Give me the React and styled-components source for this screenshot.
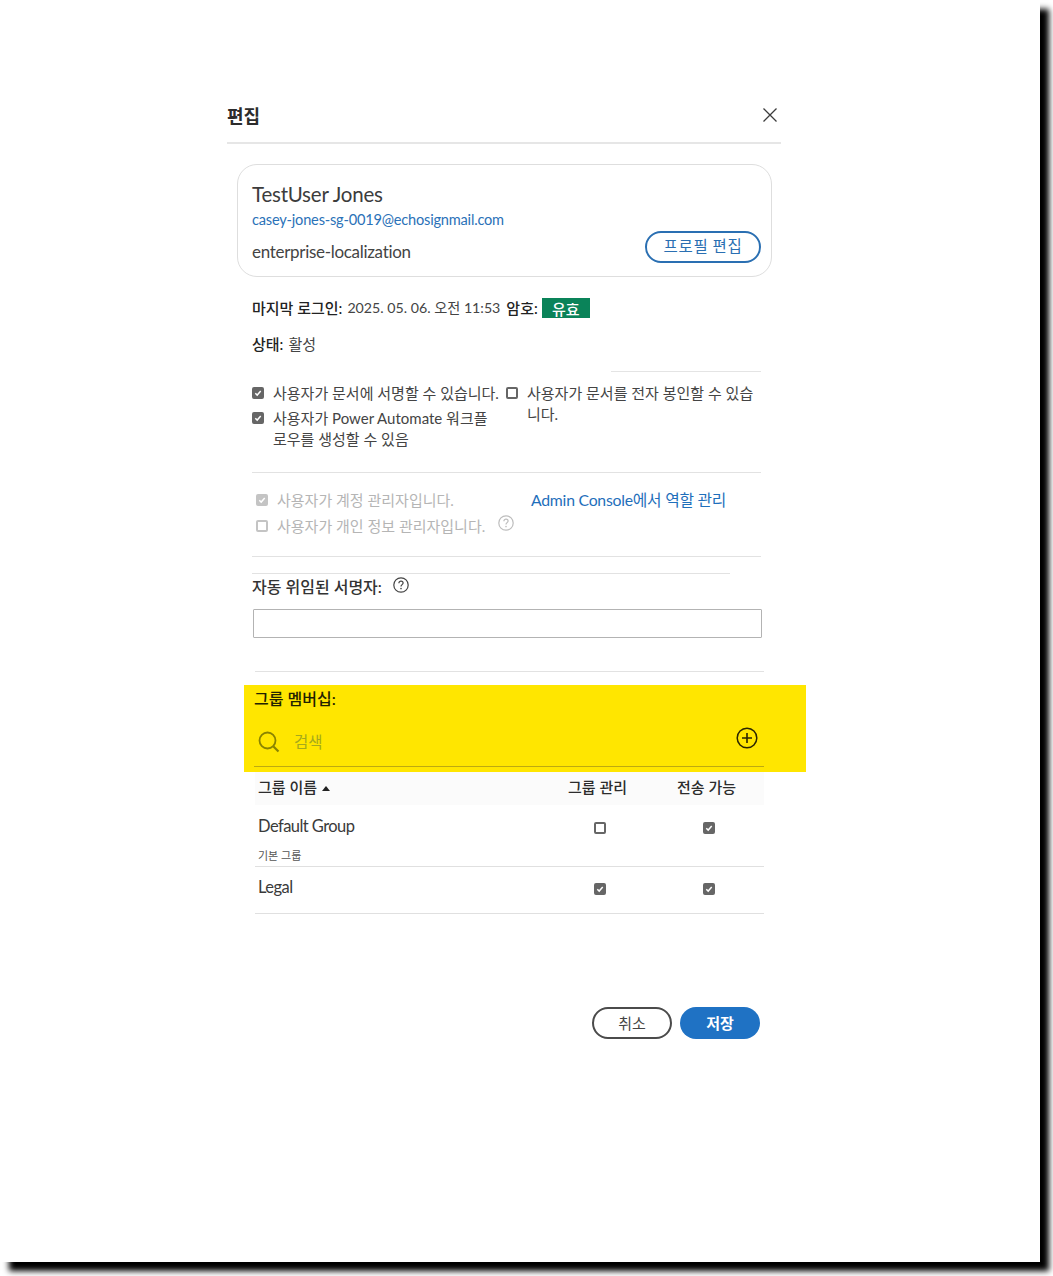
import React from "react";
import styled, { createGlobalStyle } from "styled-components";

const Global = createGlobalStyle`
  html, body { margin: 0; padding: 0; background: #fff; }
  body { font-family: "Lato", "Noto Sans CJK KR", sans-serif; color: #2c2c2c; }
`;
const Page = styled.div`width: 1053px; height: 1276px; overflow: hidden; background: #fff;`;
const Paper = styled.div`
  width: 1040px; height: 1262px; background: #fff; box-shadow: 9px 9px 6px #000;
  padding: 101px 0 0 227px; box-sizing: border-box;
`;
const Dialog = styled.div`width: 554px; display: flex; flex-direction: column;`;
const Header = styled.header`
  height: 41px; display: flex; align-items: flex-start; justify-content: space-between;
  border-bottom: 2px solid #e6e6e6;
`;
const Title = styled.h2`margin: 3px 0 0; font-size: 18px; line-height: 24px; font-weight: 700; color: #2c2c2c;`;
const Close = styled.button`
  border: 0; background: none; padding: 0; margin: 6px 3px 0 0; width: 16px; height: 16px; display: flex;
`;
const Card = styled.section`
  margin: 20px 9px 0 10px; height: 113px; box-sizing: border-box; border: 1px solid #dedede; border-radius: 20px;
  padding: 15px 10px 0 14px; display: flex; flex-direction: column;
`;
const Name = styled.div`font-size: 20.5px; line-height: 28px; color: #3c3c3c; letter-spacing: -0.2px;`;
const Email = styled.a`font-size: 14.6px; line-height: 22px; margin-top: 1px; color: #2b72b8; letter-spacing: -0.2px;`;
const OrgRow = styled.div`display: flex; justify-content: space-between; align-items: flex-start; margin-top: 9px;`;
const Org = styled.div`font-size: 17px; line-height: 24px; color: #444; letter-spacing: -0.3px;`;
const OutlineBtn = styled.button`
  width: 116px; height: 32px; margin-top: -9px; border: 2px solid #2a6fb2; border-radius: 16px; background: #fff;
  color: #2a6fb2; font: 400 15.5px "Noto Sans CJK KR", sans-serif; letter-spacing: .7px; padding: 0 0 4px;
`;
const Meta = styled.div`
  margin: ${p => p.$top}px 0 0 25px; height: 20px; display: flex; align-items: center; font-size: 15px; color: #444; white-space: nowrap;
`;
const Strong = styled.b`font-weight: 500; color: #222; margin-right: ${p => p.$gap ?? 5}px;`;
const DateText = styled.span`font-size: 14.2px; margin-right: 6px;`;
const Badge = styled.span`
  margin: 2px 0 0 4px; width: 48px; height: 20px; background: #0a8359; color: #fff; font-weight: 500; font-size: 15px;
  display: flex; align-items: center; justify-content: center;
`;
const ShortRule = styled.hr`
  border: 0; border-top: 1px solid ${p => p.$c || "#e4e4e4"}; margin: ${p => p.$top}px ${p => p.$right}px 0 ${p => p.$left}px;
`;
const TwoCols = styled.div`
  margin: 11px 20px 0 25px; display: grid; grid-template-columns: 254px 1fr; height: 89px;
`;
const Col = styled.div`display: flex; flex-direction: column;`;
const CheckRow = styled.label`
  display: flex; align-items: flex-start; font-size: 15px; line-height: 21px; color: ${p => p.$muted ? "#b5b5b5" : "#444"};
  margin-bottom: ${p => p.$mb || 0}px;
`;
const WrapText = styled.span`max-width: 225px;`;
const Box = styled.span`
  flex: none; width: 12px; height: 12px; box-sizing: border-box; border-radius: 2px; margin: 4px ${p => p.$gap ?? 9}px 0 0;
  border: 2px solid ${p => p.$c}; background: ${p => p.$on ? p.$c : "transparent"}; display: flex; align-items: center; justify-content: center;
`;
const Rule = styled.hr`
  border: 0; border-top: 1px solid #e2e2e2; margin: ${p => p.$top}px ${p => p.$right ?? 20}px 0 ${p => p.$left ?? 25}px;
`;
const AdminBlock = styled.div`
  margin: 17px 20px 0 29px; height: 66px; display: grid; grid-template-columns: 275px 1fr;
`;
const AdminLink = styled.a`font-size: 15.8px; line-height: 21px; margin-top: -1px; color: #1f6fbb; letter-spacing: -0.25px;`;
const HelpWrap = styled.span`display: inline-flex; margin: ${p => p.$mt ?? -1}px 0 0 ${p => p.$ml ?? 13}px;`;
const LabelRow = styled.div`margin: 1px 0 0 25px; height: 22px; display: flex; align-items: center; font-size: 16px; font-weight: 500; color: #333;`;
const Field = styled.input`
  margin: 12px 19px 0 26px; height: 29px; box-sizing: border-box; border: 1px solid #b3b3b3; border-radius: 1px; background: #fff;
`;
const Highlight = styled.section`
  margin: 13px -25px 0 17px; height: 87px; background: #ffe600; padding: 3px 0 0 10px; box-sizing: border-box;
`;
const GroupLabel = styled.div`font-size: 16px; font-weight: 500; line-height: 22px; color: #222200;`;
const SearchRow = styled.div`
  margin-top: 14px; width: 510px; height: 43px; box-sizing: border-box; border-bottom: 1px solid #bdaa10;
  display: flex; align-items: flex-start; padding: 5px 6px 0 4px;
`;
const SearchIcon = styled.span`display: flex; margin-top: 2px;`;
const SearchText = styled.span`margin: 2px 0 0 14px; flex: 1; color: #a5a91c; font-size: 15.5px; line-height: 22px;`;
const AddIcon = styled.span`display: flex; margin-top: -2px;`;
const Table = styled.div`margin: 0 17px 0 28px;`;
const TRow = styled.div`
  display: grid; grid-template-columns: 287px 109px 109px; padding-left: 3px; height: ${p => p.$h}px;
  border-bottom: ${p => p.$line ? "1px solid #e0e0e0" : "0"}; background: ${p => p.$bg || "transparent"}; box-sizing: border-box;
`;
const Th = styled.div`
  font-size: 15px; font-weight: 500; line-height: 20px; color: #2c2c2c; padding-top: 5px; text-align: ${p => p.$left ? "left" : "center"};
  display: ${p => p.$left ? "flex" : "block"}; padding-right: ${p => p.$left ? 0 : 4}px;
`;
const Sort = styled.span`display: inline-flex; margin: 9px 0 0 5px;`;
const Cell = styled.div`display: flex; flex-direction: column; padding-top: ${p => p.$pt}px;`;
const CellName = styled.div`font-size: 16.5px; line-height: 22px; color: #3a3a3a; letter-spacing: -0.55px;`;
const Sub = styled.div`font-size: 11px; line-height: 14px; margin-top: 12px; color: #555;`;
const CellCheck = styled.div`display: flex; justify-content: center; padding-top: ${p => p.$pt}px;`;
const Footer = styled.div`margin: 93px 21px 0 0; display: flex; justify-content: flex-end; gap: 8px;`;
const Cancel = styled.button`
  width: 80px; height: 32px; border: 2px solid #4b4b4b; border-radius: 16px; background: #fff; color: #444; padding: 0 0 2px;
  font: 400 15px "Noto Sans CJK KR", sans-serif;
`;
const Save = styled.button`
  width: 80px; height: 32px; border: 0; border-radius: 16px; background: #1f72c4; color: #fff; padding: 0 0 2px;
  font: 700 15px "Noto Sans CJK KR", sans-serif;
`;

const Check = ({ on, c = "#666", gap, tone = "#fff" }) => (
  <Box $on={on} $c={c} $gap={gap}>
    {on && (
      <svg width="10" height="10" viewBox="0 0 10 10" fill="none">
        <path d="M1.6 5.2 L4 7.6 L8.4 2.6" stroke={tone} strokeWidth="1.8" />
      </svg>
    )}
  </Box>
);
const Help = ({ c }) => (
  <svg width="16" height="16" viewBox="0 0 16 16" fill="none">
    <circle cx="8" cy="8" r="7.2" stroke={c} strokeWidth="1.2" />
    <path d="M5.9 6.2c0-1.2 1-2 2.1-2s2.1.8 2.1 1.9c0 1.5-2.1 1.6-2.1 3.3" stroke={c} strokeWidth="1.2" />
    <circle cx="8" cy="11.6" r=".8" fill={c} />
  </svg>
);

export default function App() {
  return (
    <Page>
      <Global />
      <Paper>
        <Dialog>
          <Header>
            <Title>편집</Title>
            <Close aria-label="닫기">
              <svg width="16" height="16" viewBox="0 0 16 16" fill="none">
                <path d="M1.5 1.5 L14.5 14.5 M14.5 1.5 L1.5 14.5" stroke="#3c3c3c" strokeWidth="1.3" />
              </svg>
            </Close>
          </Header>
          <Card>
            <Name>TestUser Jones</Name>
            <Email>casey-jones-sg-0019@echosignmail.com</Email>
            <OrgRow>
              <Org>enterprise-localization</Org>
              <OutlineBtn>프로필 편집</OutlineBtn>
            </OrgRow>
          </Card>
          <Meta $top={20}>
            <Strong>마지막 로그인:</Strong>
            <DateText>2025. 05. 06. 오전 11:53</DateText>
            <Strong $gap={0}>암호:</Strong>
            <Badge>유효</Badge>
          </Meta>
          <Meta $top={16}>
            <Strong>상태:</Strong>활성
          </Meta>
          <ShortRule $top={18} $left={384} $right={20} />
          <TwoCols>
            <Col>
              <CheckRow $mb={4}>
                <Check on />
                사용자가 문서에 서명할 수 있습니다.
              </CheckRow>
              <CheckRow>
                <Check on />
                <WrapText>사용자가 Power Automate 워크플로우를 생성할 수 있음</WrapText>
              </CheckRow>
            </Col>
            <Col>
              <CheckRow>
                <Check />
                <span>사용자가 문서를 전자 봉인할 수 있습니다.</span>
              </CheckRow>
            </Col>
          </TwoCols>
          <Rule $top={0} />
          <AdminBlock>
            <Col>
              <CheckRow $muted $mb={5}>
                <Check on c="#c4c4c4" gap={9} />
                사용자가 계정 관리자입니다.
              </CheckRow>
              <CheckRow $muted>
                <Check c="#c4c4c4" gap={9} />
                사용자가 개인 정보 관리자입니다.
                <HelpWrap><Help c="#bdbdbd" /></HelpWrap>
              </CheckRow>
            </Col>
            <AdminLink>Admin Console에서 역할 관리</AdminLink>
          </AdminBlock>
          <Rule $top={0} />
          <Rule $top={16} $right={51} />
          <LabelRow>
            자동 위임된 서명자:
            <HelpWrap $mt={-2} $ml={11}><Help c="#444" /></HelpWrap>
          </LabelRow>
          <Field />
          <Rule $top={33} $left={28} $right={17} />
          <Highlight>
            <GroupLabel>그룹 멤버십:</GroupLabel>
            <SearchRow>
              <SearchIcon>
                <svg width="22" height="22" viewBox="0 0 22 22" fill="none">
                  <circle cx="9.5" cy="9.5" r="8" stroke="#8a8400" strokeWidth="1.8" />
                  <path d="M15.5 15.5 L20.5 20.5" stroke="#8a8400" strokeWidth="2.2" />
                </svg>
              </SearchIcon>
              <SearchText>검색</SearchText>
              <AddIcon>
                <svg width="22" height="22" viewBox="0 0 22 22" fill="none">
                  <circle cx="11" cy="11" r="9.8" stroke="#2b2600" strokeWidth="1.5" />
                  <path d="M11 6 V16 M6 11 H16" stroke="#2b2600" strokeWidth="1.6" />
                </svg>
              </AddIcon>
            </SearchRow>
          </Highlight>
          <Table>
            <TRow $h={33} $bg="#fbfbfb">
              <Th $left>
                그룹 이름
                <Sort>
                  <svg width="8" height="5" viewBox="0 0 8 5"><path d="M0 5 L4 0 L8 5Z" fill="#222" /></svg>
                </Sort>
              </Th>
              <Th>그룹 관리</Th>
              <Th>전송 가능</Th>
            </TRow>
            <TRow $h={62} $line>
              <Cell $pt={10}>
                <CellName>Default Group</CellName>
                <Sub>기본 그룹</Sub>
              </Cell>
              <CellCheck $pt={13}><Check gap={0} /></CellCheck>
              <CellCheck $pt={13}><Check on gap={0} /></CellCheck>
            </TRow>
            <TRow $h={47} $line>
              <Cell $pt={9}><CellName>Legal</CellName></Cell>
              <CellCheck $pt={12}><Check on gap={0} /></CellCheck>
              <CellCheck $pt={12}><Check on gap={0} /></CellCheck>
            </TRow>
          </Table>
          <Footer>
            <Cancel>취소</Cancel>
            <Save>저장</Save>
          </Footer>
        </Dialog>
      </Paper>
    </Page>
  );
}
